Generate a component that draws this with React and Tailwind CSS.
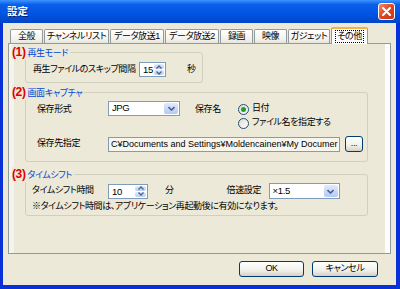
import React from 'react';

const jp = "font-['Liberation_Sans','Noto_Sans_CJK_JP',sans-serif] [font-feature-settings:'palt'] whitespace-nowrap";

const tabs = ['全般', 'チャンネルリスト', 'データ放送1', 'データ放送2', '録画', '映像', 'ガジェット'];
const tabWidths = [33, 65, 54, 54, 33, 33, 42];

const Chevron = () => (
  <svg width="7" height="5" viewBox="0 0 7 5">
    <path d="M0.5 1 L3.5 4 L6.5 1" fill="none" stroke="#4D6185" strokeWidth="1.6" />
  </svg>
);

const SpinBox = ({ value, width }) => (
  <div className={`flex h-[15px] border border-[#7F9DB9] bg-white ${width}`}>
    <div className="flex-1 pl-[3px] text-[9.5px] leading-[13px] text-black">{value}</div>
    <div className="flex w-[13px] flex-col gap-[1px] p-[1px]">
      <div className="flex flex-1 items-center justify-center rounded-[2px] bg-[linear-gradient(#E1EBFE,#B9CDF7)]">
        <svg width="6" height="4" viewBox="0 0 6 4"><path d="M0.5 3.5 L3 1 L5.5 3.5" fill="none" stroke="#4D6185" strokeWidth="1.3" /></svg>
      </div>
      <div className="flex flex-1 items-center justify-center rounded-[2px] bg-[linear-gradient(#E1EBFE,#B9CDF7)]">
        <svg width="6" height="4" viewBox="0 0 6 4"><path d="M0.5 0.5 L3 3 L5.5 0.5" fill="none" stroke="#4D6185" strokeWidth="1.3" /></svg>
      </div>
    </div>
  </div>
);

const Combo = ({ value, width, height }) => (
  <div className={`flex border border-[#7F9DB9] bg-white ${width} ${height}`}>
    <div className="flex flex-1 items-center pl-[3px] text-[9.5px] text-black">{value}</div>
    <div className="m-[1px] flex w-[14px] items-center justify-center rounded-[2px] bg-[linear-gradient(#E1EBFE,#B4C8F6)]">
      <Chevron />
    </div>
  </div>
);

const Radio = ({ checked, label }) => (
  <div className="flex h-[14px] items-center">
    <div className="flex h-[11px] w-[11px] items-center justify-center rounded-full border border-[#1C5180] bg-[linear-gradient(135deg,#DCDCD5,#FFFFFF)]">
      {checked && <div className="h-[5px] w-[5px] rounded-full bg-[#21A121]" />}
    </div>
    <span className="ml-[3px] text-[9px] tracking-[-0.4px] text-black">{label}</span>
  </div>
);

const Group = ({ num, title, className, children }) => (
  <div className={`relative rounded-[3px] border border-[#D0D0BF] ${className}`}>
    <div className="absolute left-[-14px] top-[-8px] flex items-baseline bg-[#ECE9D8] pr-[2px]">
      <span className="text-[12px] font-bold leading-[14px] text-[#E00000] font-['Liberation_Sans',sans-serif]">({num})</span>
      <span className="ml-[2px] text-[9px] tracking-[-0.4px] leading-[14px] text-[#0046D5]">{title}</span>
    </div>
    {children}
  </div>
);

const XpButton = ({ children, width }) => (
  <div className={`flex h-[16px] items-center justify-center rounded-[3px] border border-[#003C74] bg-[linear-gradient(#FFFFFF,#F0F0EA_60%,#D6D0C5)] text-[9px] tracking-[-0.4px] text-black ${width}`}>
    {children}
  </div>
);

export default function App() {
  return (
    <div className={`flex h-[289px] w-[400px] flex-col bg-[#0831D9] ${jp}`}>
      {/* title bar */}
      <div className="flex h-[23px] items-center justify-between bg-[linear-gradient(#3D95FF,#0A5FEA_20%,#0054E3_60%,#0045C8)] pl-[7px] pr-[5px]">
        <span className="text-[10.5px] font-bold text-white [text-shadow:1px_1px_#0A1E6A]">設定</span>
        <div className="flex h-[17px] w-[17px] items-center justify-center rounded-[3px] border border-white bg-[linear-gradient(135deg,#F08A6C,#E0461F_50%,#C23A1A)]">
          <svg width="9" height="9" viewBox="0 0 9 9">
            <path d="M1 1 L8 8 M8 1 L1 8" stroke="white" strokeWidth="2" strokeLinecap="round" />
          </svg>
        </div>
      </div>

      {/* body */}
      <div className="ml-[3px] mr-[4px] flex h-[262px] flex-col bg-[#ECE9D8] pl-[5px] pt-[4px] text-[9px] tracking-[-0.4px]">
        {/* tabs */}
        <div className="flex h-[16px] items-end pl-[2px]">
          {tabs.map((t, i) => (
            <div
              key={t}
              style={{ width: tabWidths[i] }}
              className="mr-[1px] flex h-[14px] items-center justify-center rounded-t-[2px] border border-b-0 border-[#919B9C] bg-[linear-gradient(#FFFFFF,#F3F2EC_70%,#E6E4DA)] text-black"
            >
              {t}
            </div>
          ))}
          <div className="relative mb-[-1px] flex h-[17px] w-[37px] items-center justify-center rounded-t-[2px] border border-b-0 border-[#919B9C] border-t-[2px] border-t-[#F5B440] bg-[#FCFCFE] text-black">
            <span className="border border-dotted border-black px-[1px] leading-[11px]">その他</span>
          </div>
        </div>

        {/* panel */}
        <div className="flex h-[211px] w-[383px] border border-[#919B9C] bg-[#ECE9D8]">
          <div className="w-[5px] bg-[#F4F3EE]" />
          <div className="flex flex-1 flex-col pl-[11px] pt-[8px]">
            <Group num="1" title="再生モード" className="h-[31px] w-[178px]">
              <div className="flex items-center pl-[7px] pt-[9px] text-black">
                <span className="w-[106px]">再生ファイルのスキップ間隔</span>
                <SpinBox value="15" width="w-[27px]" />
                <span className="ml-[21px]">秒</span>
              </div>
            </Group>

            <Group num="2" title="画面キャプチャ" className="mt-[9px] h-[70px] w-[343px]">
              <div className="flex items-start pl-[11px] pt-[8px] text-black">
                <span className="mt-[2px] w-[71px]">保存形式</span>
                <Combo value="JPG" width="w-[72px]" height="h-[15px]" />
                <span className="ml-[15px] mt-[2px] w-[43px]">保存名</span>
                <div className="mt-[1px] flex flex-col">
                  <Radio checked label="日付" />
                  <Radio label="ファイル名を指定する" />
                </div>
              </div>
              <div className="mt-[6px] flex items-center pl-[11px] text-black">
                <span className="w-[71px]">保存先指定</span>
                <div className="h-[15px] w-[232px] overflow-hidden border border-[#7F9DB9] bg-[#F6F5EE] pl-[2px] text-[9px] tracking-[0px] leading-[13px]">
                  C¥Documents and Settings¥Moldencainen¥My Documer
                </div>
                <div className="ml-[5px]">
                  <XpButton width="w-[18px]">...</XpButton>
                </div>
              </div>
            </Group>

            <Group num="3" title="タイムシフト" className="mt-[12px] h-[42px] w-[343px]">
              <div className="flex items-center pl-[6px] pt-[8px] text-black">
                <span className="w-[76px]">タイムシフト時間</span>
                <SpinBox value="10" width="w-[40px]" />
                <span className="ml-[17px]">分</span>
                <span className="ml-[53px] w-[42px]">倍速設定</span>
                <Combo value="×1.5" width="w-[71px]" height="h-[16px]" />
              </div>
              <div className="pl-[6px] pt-[1px] leading-[12px] text-black">
                ※タイムシフト時間は、アプリケーション再起動後に有効になります。
              </div>
            </Group>
          </div>
          <div className="w-[5px] bg-[#FCFCFE]" />
        </div>

        {/* buttons */}
        <div className="mt-[7px] flex justify-end gap-[8px] pr-[18px]">
          <XpButton width="w-[65px]">OK</XpButton>
          <XpButton width="w-[66px]">キャンセル</XpButton>
        </div>
      </div>
    </div>
  );
}
